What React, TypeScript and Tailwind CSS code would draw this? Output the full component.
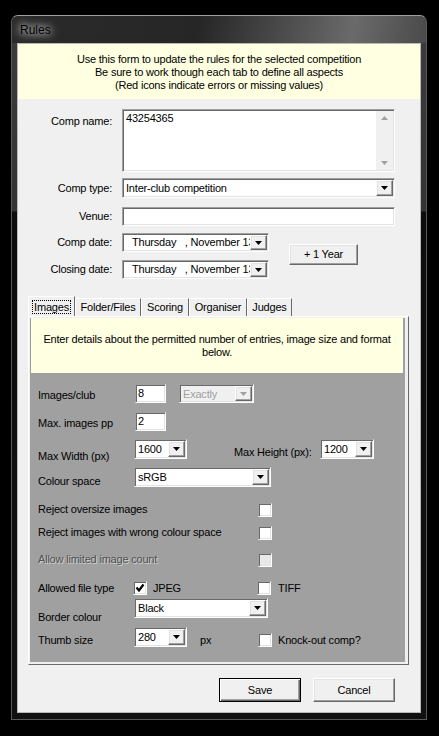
import { ReactNode } from "react";

// classic 3D borders
const sunken =
  "border border-t-[#a0a0a0] border-l-[#a0a0a0] border-b-white border-r-white shadow-[inset_1px_1px_0_#696969,inset_-1px_-1px_0_#e3e3e3]";
const raised =
  "border border-t-white border-l-white border-b-[#696969] border-r-[#696969] shadow-[inset_-1px_-1px_0_#a0a0a0,inset_1px_1px_0_#e3e3e3]";

function Arrow({ disabled }: { disabled?: boolean }) {
  return (
    <svg width="7" height="4" viewBox="0 0 7 4">
      <path d="M0 0h7L3.5 4z" fill={disabled ? "#a0a0a0" : "#000"} />
    </svg>
  );
}

function DropButton({ disabled }: { disabled?: boolean }) {
  return (
    <div className={`${raised} flex h-full w-[17px] shrink-0 items-center justify-center bg-[#f0f0f0]`}>
      <Arrow disabled={disabled} />
    </div>
  );
}

function Select({
  value,
  width,
  height = 20,
  disabled,
}: {
  value: string;
  width: string;
  height?: number;
  disabled?: boolean;
}) {
  return (
    <div
      className={`${sunken} flex ${width} ${height === 19 ? "h-[19px]" : "h-[20px]"} shrink-0 p-[1px] ${
        disabled ? "bg-[#f0f0f0] text-[#a0a0a0]" : "bg-white text-black"
      }`}
    >
      <span className="flex-1 overflow-hidden whitespace-pre pl-[2px] leading-[16px]">{value}</span>
      <DropButton disabled={disabled} />
    </div>
  );
}

function DatePicker({ value }: { value: string }) {
  return (
    <div className={`${sunken} flex h-[19px] w-[147px] bg-white p-[1px]`}>
      <span className="flex-1 overflow-hidden whitespace-pre pl-[8px] leading-[15px]">{value}</span>
      <DropButton />
    </div>
  );
}

function TextBox({ value, width }: { value: string; width: string }) {
  return (
    <div className={`${sunken} ${width} h-[19px] shrink-0 bg-white pl-[2px] leading-[16px]`}>{value}</div>
  );
}

function Check({ checked, disabled }: { checked?: boolean; disabled?: boolean }) {
  return (
    <div
      className={`${sunken} flex h-[14px] w-[14px] shrink-0 items-center justify-center ${
        disabled ? "bg-[#e8e8e8]" : "bg-white"
      }`}
    >
      {checked && (
        <svg width="10" height="10" viewBox="0 0 10 10">
          <path d="M1.5 4.5l2.5 3L8.5 1.5" stroke="#000" strokeWidth="2.2" fill="none" />
        </svg>
      )}
    </div>
  );
}

function FormRow({ label, children, className }: { label: string; children: ReactNode; className: string }) {
  return (
    <div className={`flex items-center ${className}`}>
      <span className="w-[94px] text-right">{label}</span>
      <div className="ml-[10px] flex">{children}</div>
    </div>
  );
}

function Button({ children, primary }: { children: ReactNode; primary?: boolean }) {
  return (
    <div
      className={`flex h-[24px] w-[82px] items-center justify-center bg-[#f0f0f0] ${
        primary
          ? "border border-black shadow-[inset_1px_1px_0_#fff,inset_-1px_-1px_0_#696969,inset_-2px_-2px_0_#a0a0a0]"
          : raised
      }`}
    >
      {children}
    </div>
  );
}

const tabs = [
  { name: "Images", w: "w-[47px]" },
  { name: "Folder/Files", w: "w-[66px]" },
  { name: "Scoring", w: "w-[48px]" },
  { name: "Organiser", w: "w-[58px]" },
  { name: "Judges", w: "w-[45px]" },
];

export default function App() {
  return (
    <div className="h-[736px] w-[439px] overflow-hidden bg-black pl-[11px] pt-[15px] font-['Liberation_Sans',Arial,sans-serif] text-[11px] tracking-[-0.2px] text-black">
      {/* window frame */}
      <div className="h-[705px] w-[416px] rounded-t-[7px] border border-[#5a5a5a] border-t-[#a0a0a0] bg-[linear-gradient(to_bottom,#3c3c3c_0px,#333_195px,#0c0c0c_196px,#111_100%)] px-[5px] pb-[6px]">
        <div className="-mx-[5px] flex h-[27px] items-center rounded-t-[6px] bg-[linear-gradient(100deg,#2a2a2a_0%,#262626_45%,#6a6a6a_82%,#4a4a4a_100%)] pl-[6px]">
          <span className="rounded-full px-[2px] text-[12px] tracking-normal [text-shadow:0_0_6px_#d0d0d0,0_0_10px_#b0b0b0,0_0_14px_#909090]">
            Rules
          </span>
        </div>

        {/* client area */}
        <div className="h-[670px] w-[404px] border border-[#b8b8b8] bg-[#f0f0f0]">
          <div className="flex h-[55px] flex-col items-center bg-[#ffffe1] pt-[9px] leading-[13px]">
            <span>Use this form to update the rules for the selected competition</span>
            <span>Be sure to work though each tab to define all aspects</span>
            <span>(Red icons indicate errors or missing values)</span>
          </div>

          <div className="pt-[10px]">
            <div className="flex">
              <span className="w-[94px] pt-[4px] text-right">Comp name:</span>
              <div className={`${sunken} ml-[10px] flex h-[63px] w-[273px] bg-white p-[1px]`}>
                <span className="flex-1 pl-[2px] leading-[15px]">43254365</span>
                <div className="flex w-[17px] flex-col items-center justify-between bg-[#f0f0f0] py-[5px]">
                  <svg width="7" height="4" viewBox="0 0 7 4">
                    <path d="M0 4h7L3.5 0z" fill="#a0a0a0" />
                  </svg>
                  <Arrow disabled />
                </div>
              </div>
            </div>

            <FormRow label="Comp type:" className="mt-[6px] h-[20px]">
              <Select value="Inter-club competition" width="w-[273px]" />
            </FormRow>
            <FormRow label="Venue:" className="mt-[9px] h-[19px]">
              <TextBox value="" width="w-[273px]" />
            </FormRow>

            <div className="mt-[7px] flex items-center">
              <div>
                <FormRow label="Comp date:" className="h-[19px]">
                  <DatePicker value="Thursday   , November 13, 2014" />
                </FormRow>
                <FormRow label="Closing date:" className="mt-[8px] h-[19px]">
                  <DatePicker value="Thursday   , November 13, 2014" />
                </FormRow>
              </div>
              <div className="ml-[20px] mt-[-3px]">
                <div className={`${raised} flex h-[21px] w-[69px] items-center justify-center bg-[#f0f0f0]`}>+ 1 Year</div>
              </div>
            </div>
          </div>

          {/* tab strip */}
          <div className="mt-[17px] flex h-[20px] items-end pl-[10px]">
            {tabs.map((t, i) => (
              <div
                key={t.name}
                className={`${t.w} flex items-center justify-center border border-b-0 border-t-white border-l-white border-r-[#696969] bg-[#f0f0f0] ${
                  i === 0 ? "h-[20px]" : "h-[18px]"
                }`}
              >
                <span className={i === 0 ? "border border-dotted border-black px-[1px] leading-[12px]" : ""}>{t.name}</span>
              </div>
            ))}
          </div>

          {/* tab page */}
          <div className="ml-[10px] h-[349px] w-[381px] border border-t-white border-l-white border-b-[#696969] border-r-[#696969] pb-[2px] pl-[1px] pr-[3px] pt-[1px]">
            <div className="h-full bg-[#a0a0a0]">
              <div className="ml-[1px] mr-[2px] flex h-[55px] flex-col items-center bg-[#ffffe1] pt-[15px] leading-[13px]">
                <span>Enter details about the permitted number of entries, image size and format</span>
                <span>below.</span>
              </div>

              <div className="pl-[8px]">
                <div className="mt-[11px] flex h-[19px]">
                  <span className="w-[97px] pt-[3px]">Images/club</span>
                  <TextBox value="8" width="w-[31px]" />
                  <div className="ml-[13px]">
                    <Select value="Exactly" width="w-[75px]" height={19} disabled />
                  </div>
                </div>
                <div className="mt-[9px] flex h-[19px]">
                  <span className="w-[97px] pt-[3px]">Max. images pp</span>
                  <TextBox value="2" width="w-[31px]" />
                </div>
                <div className="mt-[8px] flex h-[24px]">
                  <span className="w-[96px] pt-[9px]">Max Width (px)</span>
                  <Select value="1600" width="w-[53px]" />
                  <span className="ml-[47px] w-[86px] pt-[5px]">Max Height (px):</span>
                  <Select value="1200" width="w-[54px]" />
                </div>
                <div className="mt-[4px] flex h-[20px]">
                  <span className="w-[96px] pt-[6px]">Colour space</span>
                  <Select value="sRGB" width="w-[137px]" />
                </div>

                <div className="mt-[16px] flex h-[13px] items-center">
                  <span className="w-[220px]">Reject oversize images</span>
                  <Check />
                </div>
                <div className="mt-[10px] flex h-[13px] items-center">
                  <span className="w-[220px]">Reject images with wrong colour space</span>
                  <Check />
                </div>
                <div className="mt-[14px] flex h-[13px] items-center">
                  <span className="w-[220px] text-[#505050] [text-shadow:1px_1px_0_rgba(255,255,255,0.55)]">
                    Allow limited image count
                  </span>
                  <Check disabled />
                </div>

                <div className="mt-[15px] flex h-[14px] items-center">
                  <span className="w-[95px]">Allowed file type</span>
                  <div className="flex w-[124px] items-center">
                    <Check checked />
                    <span className="ml-[6px]">JPEG</span>
                  </div>
                  <Check />
                  <span className="ml-[7px]">TIFF</span>
                </div>

                <div className="mt-[3px] flex h-[25px]">
                  <span className="w-[96px] pt-[11px]">Border colour</span>
                  <Select value="Black" width="w-[134px]" />
                </div>

                <div className="mt-[4px] flex h-[20px]">
                  <span className="w-[96px] pt-[5px]">Thumb size</span>
                  <Select value="280" width="w-[53px]" />
                  <span className="ml-[13px] w-[58px] pt-[5px]">px</span>
                  <div className="mt-[6px] flex h-[14px] items-center">
                    <Check />
                    <span className="ml-[6px]">Knock-out comp?</span>
                  </div>
                </div>
              </div>
            </div>
          </div>

          <div className="ml-[201px] mt-[13px] flex gap-[12px]">
            <Button primary>Save</Button>
            <Button>Cancel</Button>
          </div>
        </div>
      </div>
    </div>
  );
}
